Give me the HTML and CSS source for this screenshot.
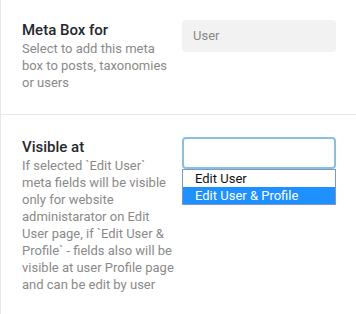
FILE: index.html
```html
<!DOCTYPE html>
<html>
<head>
<meta charset="utf-8">
<link rel="stylesheet" href="styles.css">
</head>
<body>
<div class="panel">
  <div class="row first">
    <div class="label">
      <div class="title">Meta Box for</div>
      <div class="desc">Select to add this meta box to posts, taxonomies or users</div>
    </div>
    <div class="control">
      <div class="select filled">User</div>
    </div>
  </div>
  <div class="row second">
    <div class="label">
      <div class="title">Visible at</div>
      <div class="desc">If selected `Edit User` meta fields will be visible only for website administarator on Edit User page, if `Edit User &amp; Profile` - fields also will be visible at user Profile page and can be edit by user</div>
    </div>
    <div class="control">
      <div class="select focused"></div>
      <ul class="list">
        <li>Edit User</li>
        <li class="active">Edit User &amp; Profile</li>
      </ul>
    </div>
  </div>
</div>
</body>
</html>
```
FILE: styles.css
```css
* { box-sizing: border-box; }
html, body { margin: 0; padding: 0; background: #fff; }
body { font-family: Roboto, "Noto Sans", sans-serif; }
.panel {
  width: 356px;
  height: 314px;
  border-left: 1px solid #e8e8e8;
}
.row {
  display: flex;
  padding: 0 20px 0 21px;
}
.row.first {
  height: 115px;
  padding-top: 21px;
  border-bottom: 1px solid #e8e8e8;
}
.row.second {
  padding-top: 23px;
}
.label { width: 160px; flex: none; }
.title {
  font-size: 15px;
  font-weight: 500;
  color: #23282d;
  line-height: 19px;
}
.desc {
  width: 152px;
  font-size: 13px;
  color: #8a8a8a;
  line-height: 17px;
}
.control { width: 154px; flex: none; }
.select {
  height: 32px;
  border-radius: 4px;
  font-size: 13px;
  line-height: 32px;
  padding-left: 11px;
  color: #888;
}
.select.filled { background: #f2f2f2; margin-top: -1px; }
.select.focused {
  border: 2px solid #86c1de;
  margin-top: -1px;
}
.list {
  list-style: none;
  margin: 0;
  padding: 0;
  border: 1px solid #7c97cf;
  background: #fff;
}
.list li {
  font-size: 13px;
  line-height: 17px;
  padding-left: 12px;
  color: #111;
}
.list li.active { background: #1e90ff; color: #fff; }
```
